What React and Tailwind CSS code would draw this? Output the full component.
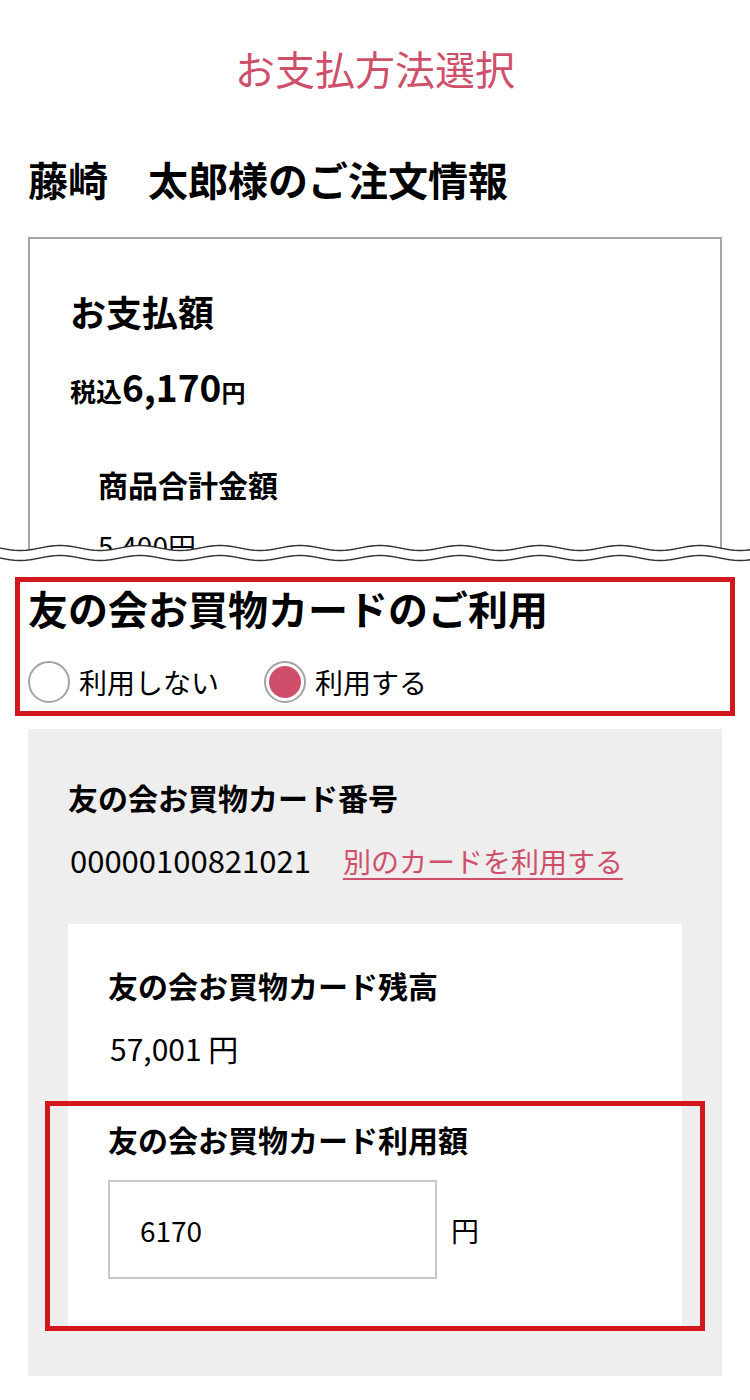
import React from 'react';

// wavy "cut" line drawn over the order box
const wavePath = (base) => {
  let d = '';
  for (let x = 0; x <= 750; x += 2) {
    const y = base + 2.5 * Math.cos((2 * Math.PI * (x - 20)) / 80);
    d += `${x === 0 ? 'M' : 'L'}${x} ${y.toFixed(2)} `;
  }
  return d;
};

const Radio = ({ checked, label }) => (
  <label className="flex items-center gap-[9px]">
    <span className="flex h-[42px] w-[42px] items-center justify-center rounded-full border-2 border-[#a3a3a3] bg-white">
      {checked && <span className="h-[32px] w-[32px] rounded-full bg-[#cf4f6a]" />}
    </span>
    <span className="text-[28px] leading-none">{label}</span>
  </label>
);

const App = () => {
  return (
    <div
      className="w-[750px] min-h-[1400px] bg-white pb-[23px] text-black"
      style={{ fontFamily: '"Noto Sans CJK JP", "Noto Sans", sans-serif' }}
    >
      <h1 className="pt-[48px] text-center text-[40px] leading-none font-normal text-[#cf4f6a]">
        お支払方法選択
      </h1>

      <h2 className="mt-[71px] px-[28px] text-[40px] leading-none font-bold">
        藤崎　太郎様のご注文情報
      </h2>

      {/* order info, cut off by a wave */}
      <div className="relative mt-[38px] h-[338px] overflow-hidden">
        <div className="mx-[28px] border-2 border-[#a6a6a6] pt-[54px] pb-[60px] pl-[40px]">
          <div className="text-[36px] leading-none font-bold">お支払額</div>
          <div className="mt-[39px] flex items-baseline leading-none">
            <span className="text-[26px] font-bold">税込</span>
            <span className="text-[37px] font-bold">6,170</span>
            <span className="text-[24px] font-bold">円</span>
          </div>
          <div className="mt-[64px] pl-[28px]">
            <div className="text-[30px] leading-none font-bold">商品合計金額</div>
            <div className="mt-[33px] text-[28px] leading-none">5,400円</div>
          </div>
        </div>
        <svg
          className="absolute bottom-0 left-0"
          width="750"
          height="32"
          viewBox="0 0 750 32"
        >
          <path d={wavePath(5) + 'L750 32 L0 32 Z'} fill="#fff" />
          <path d={wavePath(5)} fill="none" stroke="#333" strokeWidth="1.4" />
          <path d={wavePath(15)} fill="none" stroke="#333" strokeWidth="1.4" />
        </svg>
      </div>

      {/* card usage choice */}
      <div className="mx-[15px] mt-[2px] border-[5px] border-[#d3171c] pt-[2px] pb-[8px] pl-[8px]">
        <h3 className="text-[40px] leading-[48px] font-bold">友の会お買物カードのご利用</h3>
        <div className="mt-[29px] flex items-center gap-[45px]">
          <Radio checked={false} label="利用しない" />
          <Radio checked label="利用する" />
        </div>
      </div>

      <div className="mx-[28px] mt-[13px] bg-[#eeeeee] px-[40px] pt-[53px] pb-[47px]">
        <div className="text-[30px] leading-none font-bold">友の会お買物カード番号</div>
        <div className="mt-[32px] flex items-baseline gap-[32px] leading-none">
          <span className="pl-[2px] text-[31px]">00000100821021</span>
          <a className="text-[28px] text-[#cf4f6a] underline decoration-2 underline-offset-[5px]">
            別のカードを利用する
          </a>
        </div>

        <div className="mt-[49px] bg-white pt-[46px]">
          <div className="px-[40px]">
            <div className="text-[30px] leading-none font-bold">友の会お買物カード残高</div>
            <div className="mt-[33px] pl-[2px] text-[30px] leading-none">57,001 円</div>
          </div>

          <div className="relative mt-[61px] px-[40px] pb-[50px]">
            <div className="text-[30px] leading-none font-bold">友の会お買物カード利用額</div>
            <div className="mt-[26px] flex items-center gap-[14px]">
              <div className="flex h-[99px] w-[329px] items-center border-2 border-[#c8c8c8] bg-white pl-[30px] text-[28px] leading-none">
                6170
              </div>
              <span className="text-[28px] leading-none">円</span>
            </div>
            <div className="pointer-events-none absolute -top-[23px] -right-[23px] -bottom-[2px] -left-[23px] border-[5px] border-[#d3171c]" />
          </div>
        </div>
      </div>
    </div>
  );
};

export default App;
